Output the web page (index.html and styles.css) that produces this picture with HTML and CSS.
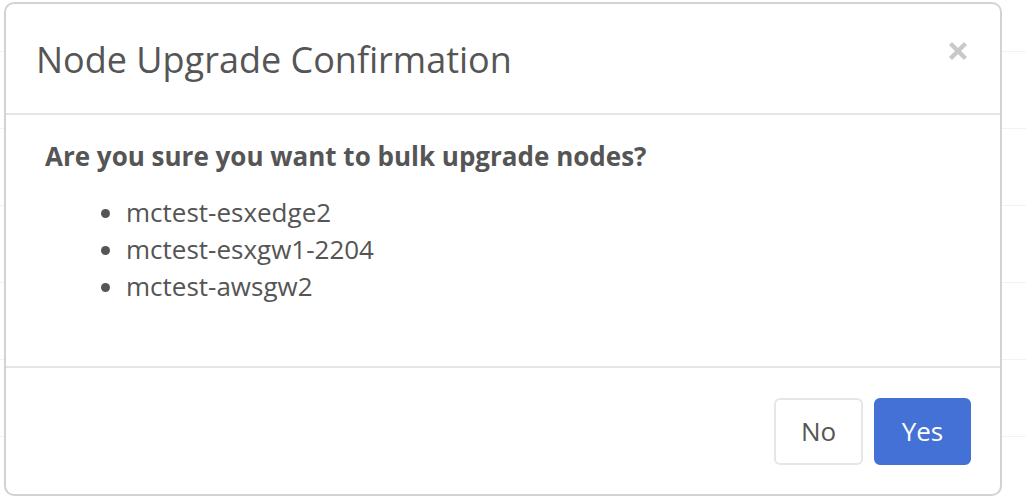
FILE: index.html
```html
<!DOCTYPE html>
<html lang="en">
<head>
<meta charset="utf-8">
<title>Node Upgrade Confirmation</title>
<link rel="stylesheet" href="styles.css">
</head>
<body>
<div class="backdrop">
  <div class="row row-first"></div>
  <div class="row"></div>
  <div class="row"></div>
  <div class="row"></div>
  <div class="row"></div>
  <div class="row"></div>
</div>
<div class="modal">
  <div class="modal-header">
    <h4 class="modal-title">Node Upgrade Confirmation</h4>
    <button class="close" type="button" aria-label="Close">
      <svg width="20" height="20" viewBox="0 0 20 20"><path d="M2.5 2.5 L17.5 17.5 M17.5 2.5 L2.5 17.5" stroke="#c9c9c9" stroke-width="4.4" fill="none"/></svg>
    </button>
  </div>
  <div class="modal-body">
    <p class="question">Are you sure you want to bulk upgrade nodes?</p>
    <ul class="node-list">
      <li>mctest-esxedge2</li>
      <li>mctest-esxgw1-2204</li>
      <li>mctest-awsgw2</li>
    </ul>
  </div>
  <div class="modal-footer">
    <button class="btn btn-default" type="button">No</button>
    <button class="btn btn-primary" type="button">Yes</button>
  </div>
</div>
</body>
</html>
```

FILE: styles.css
```css
* { box-sizing: border-box; }

html, body {
  margin: 0;
  padding: 0;
  background: #ffffff;
  width: 1026px;
  height: 500px;
  overflow: hidden;
  font-family: "Open Sans", "DejaVu Sans", sans-serif;
  color: #555555;
}

.backdrop {
  display: flex;
  flex-direction: column;
}

.row {
  height: 77px;
  border-bottom: 1px solid #f2f2f2;
  flex: none;
}

.row-first {
  height: 52px;
}

.modal {
  position: absolute;
  left: 4px;
  top: 2px;
  width: 998px;
  height: 494px;
  background: #ffffff;
  border: 2px solid #d2d2d2;
  border-radius: 10px;
  display: flex;
  flex-direction: column;
}

.modal-header {
  height: 111px;
  border-bottom: 2px solid #e5e5e5;
  display: flex;
  align-items: center;
  justify-content: space-between;
  padding: 2px 32px 0 30px;
  flex: none;
}

.modal-title {
  margin: 0;
  font-size: 36px;
  font-weight: 400;
  line-height: 1.42857;
  color: #555555;
}

.close {
  background: none;
  border: 0;
  padding: 0;
  margin: 0 0 17px 0;
  width: 20px;
  height: 20px;
  display: flex;
  cursor: pointer;
}

.modal-body {
  flex: 1;
  padding: 23px 30px 0 39px;
}

.question {
  margin: 0 0 19px 0;
  font-size: 26px;
  font-weight: 700;
  line-height: 1.42857;
  color: #555555;
}

.node-list {
  margin: 0;
  padding-left: 81px;
  font-size: 26px;
  line-height: 37px;
}

.modal-footer {
  height: 128px;
  flex: none;
  border-top: 2px solid #e5e5e5;
  display: flex;
  justify-content: flex-end;
  align-items: flex-start;
  gap: 11px;
  padding: 30px 29px 0 0;
}

.btn {
  font-family: "Open Sans", "DejaVu Sans", sans-serif;
  font-size: 26px;
  line-height: 37px;
  height: 67px;
  padding: 0;
  border-radius: 6px;
  cursor: pointer;
}

.btn-default {
  background: #ffffff;
  color: #555555;
  border: 2px solid #e6e6e6;
  width: 89px;
}

.btn-primary {
  background: #4471d5;
  color: #ffffff;
  border: 2px solid #4471d5;
  width: 97px;
}
```
